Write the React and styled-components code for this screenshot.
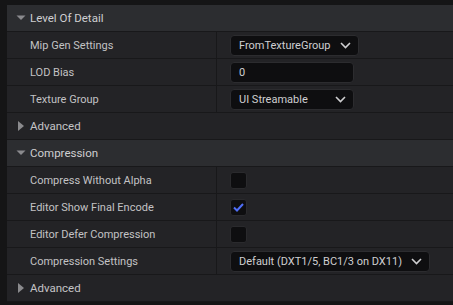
import React from "react";
import styled, { createGlobalStyle } from "styled-components";

const Global = createGlobalStyle`
  html, body { margin: 0; padding: 0; background: #151516; }
  body { font-family: Roboto, "Noto Sans", sans-serif; font-size: 11px; }
`;

const Panel = styled.div`
  width: 453px;
  height: 305px;
  box-sizing: border-box;
  padding: 5px 0 0 7px;
  background: #151516;
  overflow: hidden;
`;

const Row = styled.div`
  display: grid;
  grid-template-columns: 210px 1fr;
  height: 26px;
  border-bottom: 1px solid #18181a;
  background: ${(p) => (p.$header ? "#2c2d30" : "#232326")};
`;

const HeaderRow = styled.div`
  display: flex;
  align-items: center;
  height: 26px;
  border-bottom: 1px solid #18181a;
  background: ${(p) => (p.$category ? "#2c2d30" : "#232326")};
  color: ${(p) => (p.$category ? "#cfcfd1" : "#c4c4c6")};
  font-size: 11.5px;
`;

const Arrow = styled.span`
  width: 23px;
  display: flex;
  justify-content: center;
  padding-left: 4px;
  box-sizing: border-box;
`;

const Label = styled.div`
  display: flex;
  align-items: center;
  padding-left: 23px;
  border-right: 1px solid #18181a;
  color: #c2c2c4;
  font-size: 11px;
`;

const Value = styled.div`
  display: flex;
  align-items: center;
  padding-left: 13px;
`;

const Field = styled.div`
  box-sizing: border-box;
  height: 21px;
  width: ${(p) => p.$w}px;
  display: flex;
  align-items: center;
  justify-content: space-between;
  padding: 0 7px 0 8px;
  background: #0e0e10;
  border: 1px solid #2c2c2f;
  border-radius: 4px;
  color: #cfcfd1;
  font-size: 11px;
`;

const Check = styled.div`
  box-sizing: border-box;
  width: 17px;
  height: 17px;
  background: #0e0e10;
  border: 1px solid #2a2a2d;
  border-radius: 3px;
  display: flex;
  align-items: center;
  justify-content: center;
`;

const Down = () => (
  <svg width="10" height="7" viewBox="0 0 10 7">
    <path d="M0.5 0.5 L5 5 L9.5 0.5 Z" fill="#8a8a8d" />
  </svg>
);

const Right = () => (
  <svg width="6" height="10" viewBox="0 0 6 10">
    <path d="M0 0 L6 5 L0 10 Z" fill="#8a8a8d" />
  </svg>
);

const Chevron = () => (
  <svg width="11" height="7" viewBox="0 0 11 7">
    <path d="M1 1 L5.5 5.5 L10 1" fill="none" stroke="#cfcfd1" strokeWidth="1.6" />
  </svg>
);

const Tick = () => (
  <svg width="11" height="9" viewBox="0 0 11 9">
    <path d="M1 4.5 L4 7.5 L10 1" fill="none" stroke="#4f6ef7" strokeWidth="2" />
  </svg>
);

const Prop = ({ label, children }) => (
  <Row>
    <Label>{label}</Label>
    <Value>{children}</Value>
  </Row>
);

const Dropdown = ({ w, text }) => (
  <Field $w={w}>
    <span>{text}</span>
    <Chevron />
  </Field>
);

export default function App() {
  return (
    <>
      <Global />
      <Panel>
        <HeaderRow $category>
          <Arrow><Down /></Arrow>
          Level Of Detail
        </HeaderRow>
        <Prop label="Mip Gen Settings">
          <Dropdown w={129} text="FromTextureGroup" />
        </Prop>
        <Prop label="LOD Bias">
          <Field $w={124}>0</Field>
        </Prop>
        <Prop label="Texture Group">
          <Dropdown w={124} text="UI Streamable" />
        </Prop>
        <HeaderRow>
          <Arrow><Right /></Arrow>
          Advanced
        </HeaderRow>
        <HeaderRow $category>
          <Arrow><Down /></Arrow>
          Compression
        </HeaderRow>
        <Prop label="Compress Without Alpha">
          <Check />
        </Prop>
        <Prop label="Editor Show Final Encode">
          <Check><Tick /></Check>
        </Prop>
        <Prop label="Editor Defer Compression">
          <Check />
        </Prop>
        <Prop label="Compression Settings">
          <Dropdown w={200} text="Default (DXT1/5, BC1/3 on DX11)" />
        </Prop>
        <HeaderRow>
          <Arrow><Right /></Arrow>
          Advanced
        </HeaderRow>
      </Panel>
    </>
  );
}
